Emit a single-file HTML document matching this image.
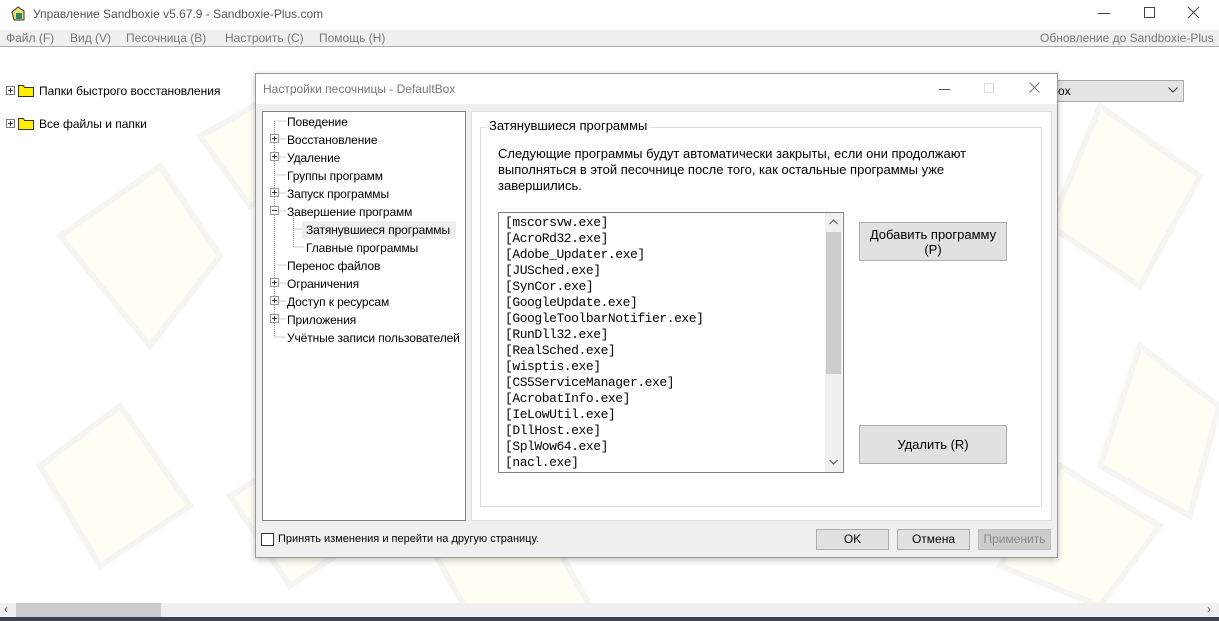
<!DOCTYPE html>
<html><head><meta charset="utf-8"><style>
*{box-sizing:border-box;margin:0;padding:0}
body{width:1219px;height:621px;overflow:hidden;background:#fff;font-family:"Liberation Sans",sans-serif;font-size:12px;color:#000;position:relative}
.a{position:absolute;white-space:nowrap}
.btn{position:absolute;background:#e1e1e1;border:1px solid #adadad;text-align:center;font-size:12px}
.mono{font-family:"Liberation Mono",monospace;font-size:13px;line-height:16px}
</style></head><body>
<svg class="a" style="left:0;top:46px" width="1219" height="570">
<g fill="#fefef4" stroke="#f5f5f2" stroke-width="6">
<polygon points="60,190 160,120 220,210 150,300"/>
<polygon points="40,420 120,360 190,460 100,520"/>
<polygon points="230,450 330,390 380,480 290,540"/>
<polygon points="1100,60 1200,130 1140,240 1050,180"/>
<polygon points="1140,300 1219,360 1190,470 1100,420"/>
<polygon points="1060,420 1160,480 1100,560 1000,520"/>
<polygon points="430,500 540,470 590,560 470,570"/>
<polygon points="200,90 290,40 330,120 250,160"/>
</g></svg>
<!-- title bar -->
<div class="a" style="left:10px;top:6px;width:16px;height:16px"><svg width="16" height="16"><polygon points="2,6 8,1 14,5 14,14 4,14" fill="#e8e070" stroke="#333"/><rect x="6" y="7" width="6" height="6" fill="#386"/></svg></div>
<div class="a" style="left:33px;top:7px;font-size:12px;color:#555">Управление Sandboxie v5.67.9 - Sandboxie-Plus.com</div>
<div class="a" style="left:1098px;top:13px;width:12px;height:1px;background:#444"></div>
<div class="a" style="left:1144px;top:7px;width:11px;height:11px;border:1px solid #444"></div>
<svg class="a" style="left:1187px;top:6px" width="13" height="13"><path d="M1,1L12,12M12,1L1,12" stroke="#444" stroke-width="1"/></svg>
<div class="a" style="left:0;top:30px;width:1219px;height:17px;background:#f0f0f0;border-bottom:1px solid #aaa"></div>
<div class="a" style="left:6px;top:31px;color:#777">Файл (F)</div>
<div class="a" style="left:70px;top:31px;color:#777">Вид (V)</div>
<div class="a" style="left:126px;top:31px;color:#777">Песочница (B)</div>
<div class="a" style="left:225px;top:31px;color:#777">Настроить (C)</div>
<div class="a" style="left:319px;top:31px;color:#777">Помощь (H)</div>
<div class="a" style="left:1040px;top:31px;color:#777">Обновление до Sandboxie-Plus</div>
<!-- left tree -->
<svg class="a" style="left:6px;top:84px" width="30" height="48">
<g fill="#fff" stroke="#777"><rect x="0.5" y="2.5" width="8" height="8"/><rect x="0.5" y="35.5" width="8" height="8"/></g>
<g stroke="#333"><path d="M2,6.5h5M4.5,4v5M2,39.5h5M4.5,37v5"/></g>
<g fill="#ffee00" stroke="#333"><path d="M12.5,1.5h5l1,2h9v9h-15z"/><path d="M12.5,34.5h5l1,2h9v9h-15z"/></g>
</svg>
<div class="a" style="left:39px;top:84px">Папки быстрого восстановления</div>
<div class="a" style="left:39px;top:117px">Все файлы и папки</div>
<!-- combobox -->
<div class="a" style="left:1057px;top:80px;width:127px;height:22px;background:#e5e5e5;border:1px solid #aaa"></div>
<div class="a" style="left:1058px;top:84px">ox</div>
<svg class="a" style="left:1168px;top:87px" width="10" height="6"><path d="M0.5,0.5L5,5L9.5,0.5" stroke="#333" fill="none"/></svg>
<!-- scrollbar -->
<div class="a" style="left:0;top:603px;width:1219px;height:14px;background:#f0f0f0"></div>
<div class="a" style="left:16px;top:603px;width:145px;height:14px;background:#cdcdcd"></div>
<div class="a" style="left:4px;top:602px;color:#555">‹</div>
<div class="a" style="left:1207px;top:602px;color:#555">›</div>
<div class="a" style="left:0;top:617px;width:1219px;height:4px;background:#3a4050"></div>
<!-- dialog -->
<div class="a" style="left:255px;top:73px;width:803px;height:485px;background:#f0f0f0;border:1px solid #999;box-shadow:0 2px 6px rgba(0,0,0,.25)"></div>
<div class="a" style="left:256px;top:74px;width:801px;height:30px;background:#fff"></div>
<div class="a" style="left:263px;top:82px;color:#777">Настройки песочницы - DefaultBox</div>
<div class="a" style="left:939px;top:89px;width:11px;height:1px;background:#555"></div>
<div class="a" style="left:984px;top:83px;width:10px;height:10px;border:1px solid #ddd"></div>
<svg class="a" style="left:1029px;top:82px" width="11" height="11"><path d="M0.5,0.5L10.5,10.5M10.5,0.5L0.5,10.5" stroke="#777"/></svg>
<div class="a" style="left:262px;top:111px;width:204px;height:410px;background:#fff;border:1px solid #828282"></div>
<div class="a" style="left:471px;top:111px;width:581px;height:410px;background:#fff;border:1px solid #ddd"></div>
<svg class="a" style="left:262px;top:111px" width="200" height="240"><g stroke="#999" stroke-dasharray="1,1" fill="none">
<path d="M12.5,10 V226 M12.5,10 H24 M12.5,28 H24 M12.5,46 H24 M12.5,64 H24 M12.5,82 H24 M12.5,100 H24 M12.5,154 H24 M12.5,172 H24 M12.5,190 H24 M12.5,208 H24 M12.5,226 H24 M31.5,105 V136 M31.5,118 H42 M31.5,136 H42"/></g>
<g fill="#fff" stroke="#999"><rect x="8.5" y="23.5" width="8" height="8"/><rect x="8.5" y="41.5" width="8" height="8"/><rect x="8.5" y="77.5" width="8" height="8"/><rect x="8.5" y="95.5" width="8" height="8"/><rect x="8.5" y="167.5" width="8" height="8"/><rect x="8.5" y="185.5" width="8" height="8"/><rect x="8.5" y="203.5" width="8" height="8"/></g>
<g stroke="#333"><path d="M10,27.5h5M10,45.5h5M10,81.5h5M10,99.5h5M10,171.5h5M10,189.5h5M10,207.5h5M12.5,25v5M12.5,43v5M12.5,79v5M12.5,169v5M12.5,187v5M12.5,205v5"/></g></svg>
<div class="a" style="left:302px;top:221px;width:154px;height:18px;background:#eee"></div>
<div class="a" style="left:287px;top:113px;line-height:18px;letter-spacing:-0.1px">Поведение<br>Восстановление<br>Удаление<br>Группы программ<br>Запуск программы<br>Завершение программ<br><span style="padding-left:19px">Затянувшиеся программы</span><br><span style="padding-left:19px">Главные программы</span><br>Перенос файлов<br>Ограничения<br>Доступ к ресурсам<br>Приложения<br>Учётные записи пользователей</div>
<!-- groupbox -->
<div class="a" style="left:480px;top:127px;width:562px;height:380px;border:1px solid #dcdcdc"></div>
<div class="a" style="left:486px;top:118px;background:#fff;padding:0 3px;font-size:13px">Затянувшиеся программы</div>
<div class="a" style="left:498px;top:146px;font-size:13px;line-height:16px">Следующие программы будут автоматически закрыты, если они продолжают<br>выполняться в этой песочнице после того, как остальные программы уже<br>завершились.</div>
<div class="a" style="left:498px;top:212px;width:346px;height:261px;border:1px solid #828282;background:#fff;overflow:hidden"></div>
<div class="a mono" style="left:505px;top:215px;letter-spacing:-0.45px">[mscorsvw.exe]<br>[AcroRd32.exe]<br>[Adobe_Updater.exe]<br>[JUSched.exe]<br>[SynCor.exe]<br>[GoogleUpdate.exe]<br>[GoogleToolbarNotifier.exe]<br>[RunDll32.exe]<br>[RealSched.exe]<br>[wisptis.exe]<br>[CS5ServiceManager.exe]<br>[AcrobatInfo.exe]<br>[IeLowUtil.exe]<br>[DllHost.exe]<br>[SplWow64.exe]<br>[nacl.exe]</div>
<div class="a" style="left:825px;top:213px;width:17px;height:259px;background:#f0f0f0"></div>
<div class="a" style="left:826px;top:232px;width:15px;height:142px;background:#cdcdcd"></div>
<svg class="a" style="left:829px;top:219px" width="9" height="6"><path d="M0.5,5L4.5,1L8.5,5" stroke="#555" fill="none"/></svg>
<svg class="a" style="left:829px;top:459px" width="9" height="6"><path d="M0.5,1L4.5,5L8.5,1" stroke="#555" fill="none"/></svg>
<div class="btn" style="left:859px;top:222px;width:148px;height:39px;padding-top:4px;font-size:13px;line-height:15px">Добавить программу<br>(P)</div>
<div class="btn" style="left:859px;top:425px;width:148px;height:39px;line-height:37px;font-size:13px">Удалить (R)</div>
<!-- bottom -->
<div class="a" style="left:261px;top:533px;width:13px;height:13px;border:1px solid #333;background:#fff"></div>
<div class="a" style="left:278px;top:533px;font-size:11px">Принять изменения и перейти на другую страницу.</div>
<div class="btn" style="left:816px;top:529px;width:73px;height:21px;line-height:19px">OK</div>
<div class="btn" style="left:897px;top:529px;width:73px;height:21px;line-height:19px">Отмена</div>
<div class="btn" style="left:978px;top:529px;width:73px;height:21px;line-height:19px;background:#ccc;border-color:#bfbfbf;color:#888">Применить</div>
</body></html>
